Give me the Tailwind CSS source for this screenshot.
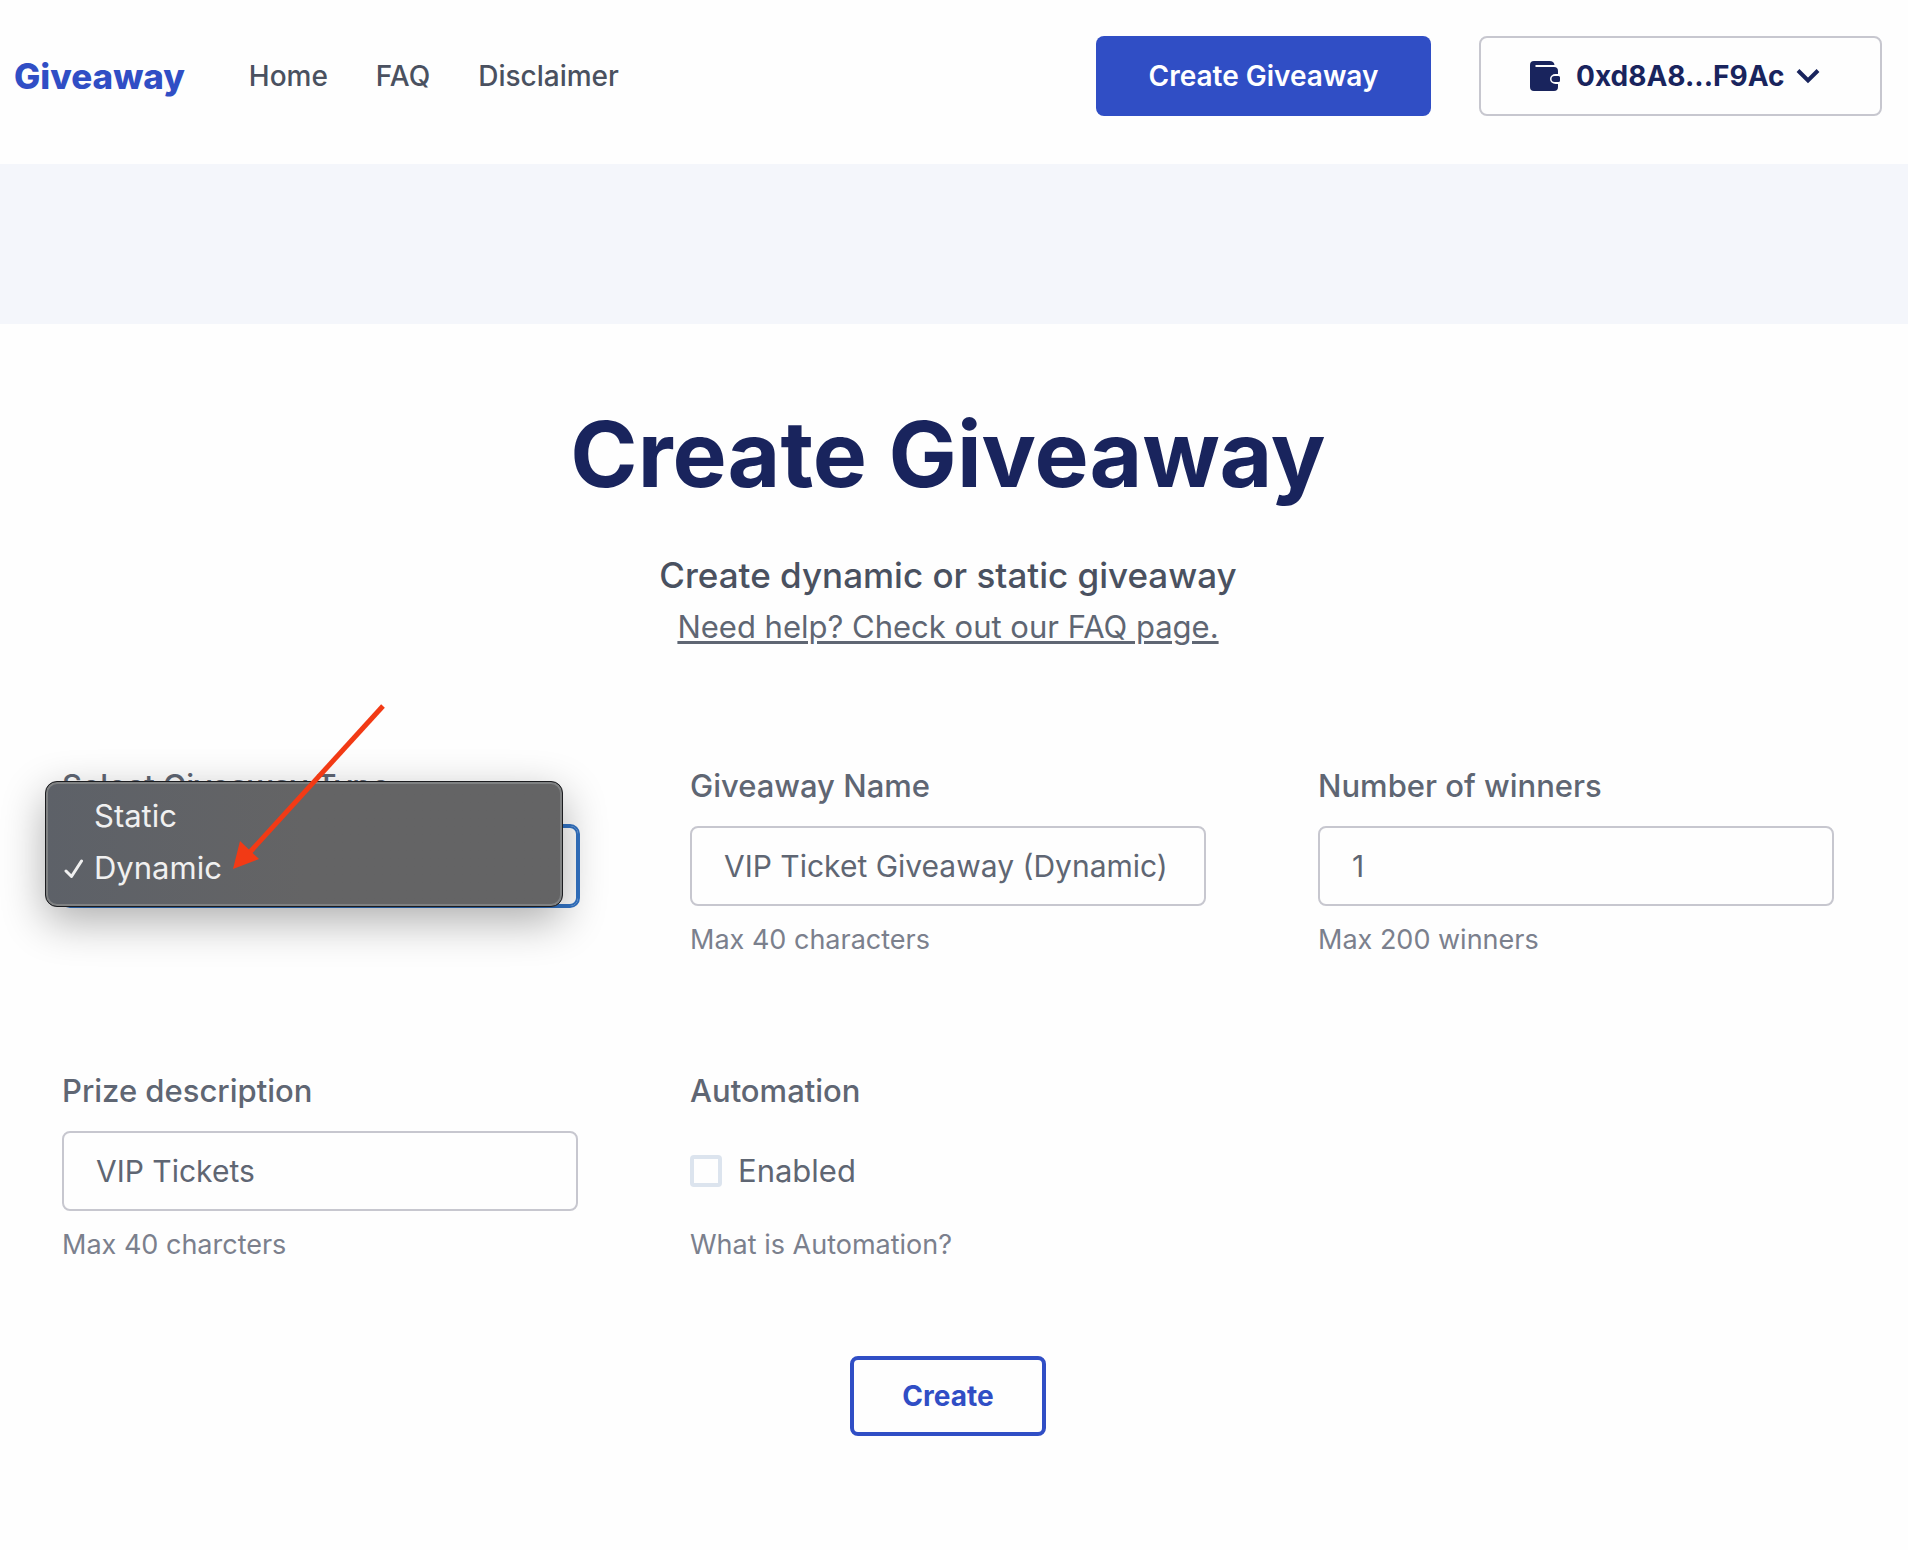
<!DOCTYPE html>
<html lang="en">
<head>
<meta charset="utf-8">
<title>Create Giveaway</title>
<script src="https://cdn.jsdelivr.net/npm/@tailwindcss/browser@4"></script>
</head>
<body class="min-h-screen bg-[#fefefe] font-['Inter',sans-serif] text-[#5f6673]">
<header class="bg-[#fefefe] pr-3">
  <div class="flex h-[164px] items-start justify-between px-[14px] pt-9">
    <nav class="flex h-20 items-center text-[28px] font-medium text-[#4a5160]" aria-label="Main">
      <a href="#" class="mr-16 text-[35px] font-extrabold text-[#304ec5]">Giveaway</a>
      <div class="flex gap-12">
        <a href="#">Home</a>
        <a href="#">FAQ</a>
        <a href="#">Disclaimer</a>
      </div>
    </nav>
    <div class="flex gap-12">
      <button class="h-20 w-[335px] rounded-lg bg-[#304ec5] text-[28px] font-semibold text-white">Create Giveaway</button>
      <button class="flex h-20 w-[403px] items-center rounded-lg border-2 border-[#c7c7cf] pr-2 pl-[49px] text-[28px] font-bold text-[#19245d]">
        <svg class="mr-4 h-[30px] w-[30px] shrink-0" viewBox="0 0 30 30" fill="currentColor" aria-hidden="true">
          <path d="M4 0H19.500Q24 0 24.500 4H5.500V6H24Q28 6 28 10V13H25.500A5.500 5 0 0 0 25.500 23H28V26Q28 30 24 30H4Q0 30 0 26V4Q0 0 4 0Z"/>
          <path d="M24.500 15H28.500Q30 15 30 16.500V19.500Q30 21 28.500 21H24.500A3 3 0 0 1 24.500 15Z"/>
        </svg>
        <span>0xd8A8...F9Ac</span>
        <svg class="ml-3 h-4 w-6 shrink-0" viewBox="0 0 24 16" fill="none" stroke="currentColor" stroke-width="4" aria-hidden="true"><path d="M2 2.500L12 12.500L22 2.500"/></svg>
      </button>
    </div>
  </div>
</header>
<div class="h-[160px] bg-[#f4f6fb]"></div>
<main class="pr-3">
  <div class="flex flex-col items-center pt-[82px]">
    <h1 class="text-[91px] leading-24 font-bold text-[#19245d]">Create Giveaway</h1>
    <p class="mt-[47px] text-[35px] leading-[52px] font-medium text-[#4a5160]">Create dynamic or static giveaway</p>
    <a href="#" class="text-[31px] leading-[52px] underline decoration-[3px] underline-offset-3">Need help? Check out our FAQ page.</a>
  </div>
  <form class="mt-[113px] flex flex-col items-center">
    <div class="grid w-full grid-cols-3 gap-x-28 gap-y-[111px] px-[62px] text-[31px]">
      <div class="relative flex flex-col">
        <label for="type" class="leading-10 font-medium">Select Giveaway Type</label>
        <select id="type" class="mt-5 h-20 w-full appearance-none rounded-lg border-2 border-[#3273c4] px-8 outline-2 outline-[#3273c4]">
          <option>Static</option>
          <option selected>Dynamic</option>
        </select>
        <ul class="absolute top-[15px] -left-[17px] h-[126px] w-[518px] rounded-xl border border-[#1c1d20] bg-[#626365] bg-linear-to-r from-[#5d6168] to-[#646465] to-50% pt-2 text-[31px] text-[#f0f0f0] shadow-[0_14px_44px_rgba(0,0,0,0.32)] inset-ring-2 inset-ring-[#7f8182]" role="listbox" aria-label="Giveaway type">
          <li class="pl-12 leading-[52px]" role="option" aria-selected="false">Static</li>
          <li class="flex items-center pl-[18px] leading-[52px]" role="option" aria-selected="true">
            <svg class="mr-[10px] h-5 w-5" viewBox="0 0 20 20" fill="none" stroke="currentColor" stroke-width="3" stroke-linecap="round" stroke-linejoin="round" aria-hidden="true"><path d="M2 13L7.500 18.500L17.500 3"/></svg>
            Dynamic
          </li>
        </ul>
        <svg class="pointer-events-none absolute -top-[62px] left-[170px] h-[170px] w-[156px]" viewBox="0 0 156 170" aria-hidden="true">
          <path d="M151 2L18 148" stroke="#f23a15" stroke-width="5" fill="none"/>
          <path d="M1 165L8 137L27 155Z" fill="#f23a15"/>
        </svg>
      </div>
      <div class="flex flex-col">
        <label for="name" class="leading-10 font-medium">Giveaway Name</label>
        <input id="name" type="text" value="VIP Ticket Giveaway (Dynamic)" class="mt-5 h-20 w-full rounded-lg border-2 border-[#c7c7cf] pr-4 pl-8 text-[30px]">
        <p class="mt-[14px] text-[27px] leading-10 text-[#7b808d]">Max 40 characters</p>
      </div>
      <div class="flex flex-col">
        <label for="winners" class="leading-10 font-medium">Number of winners</label>
        <input id="winners" type="text" inputmode="numeric" value="1" class="mt-5 h-20 w-full rounded-lg border-2 border-[#c7c7cf] pr-4 pl-8 text-[30px]">
        <p class="mt-[14px] text-[27px] leading-10 text-[#7b808d]">Max 200 winners</p>
      </div>
      <div class="flex flex-col">
        <label for="prize" class="leading-10 font-medium">Prize description</label>
        <input id="prize" type="text" value="VIP Tickets" class="mt-5 h-20 w-full rounded-lg border-2 border-[#c7c7cf] pr-4 pl-8 text-[30px]">
        <p class="mt-[14px] text-[27px] leading-10 text-[#7b808d]">Max 40 charcters</p>
      </div>
      <fieldset class="flex flex-col">
        <legend class="leading-10 font-medium">Automation</legend>
        <label class="mt-5 flex h-20 items-center gap-4">
          <input type="checkbox" class="size-8 appearance-none rounded border-4 border-[#dce4ee]">
          Enabled
        </label>
        <a href="#" class="mt-[14px] text-[27px] leading-10 text-[#7b808d]">What is Automation?</a>
      </fieldset>
    </div>
    <button type="button" class="mt-[91px] h-20 w-[196px] rounded-lg border-4 border-[#304ec5] text-[28px] font-bold text-[#304ec5]">Create</button>
  </form>
</main>
</body>
</html>
